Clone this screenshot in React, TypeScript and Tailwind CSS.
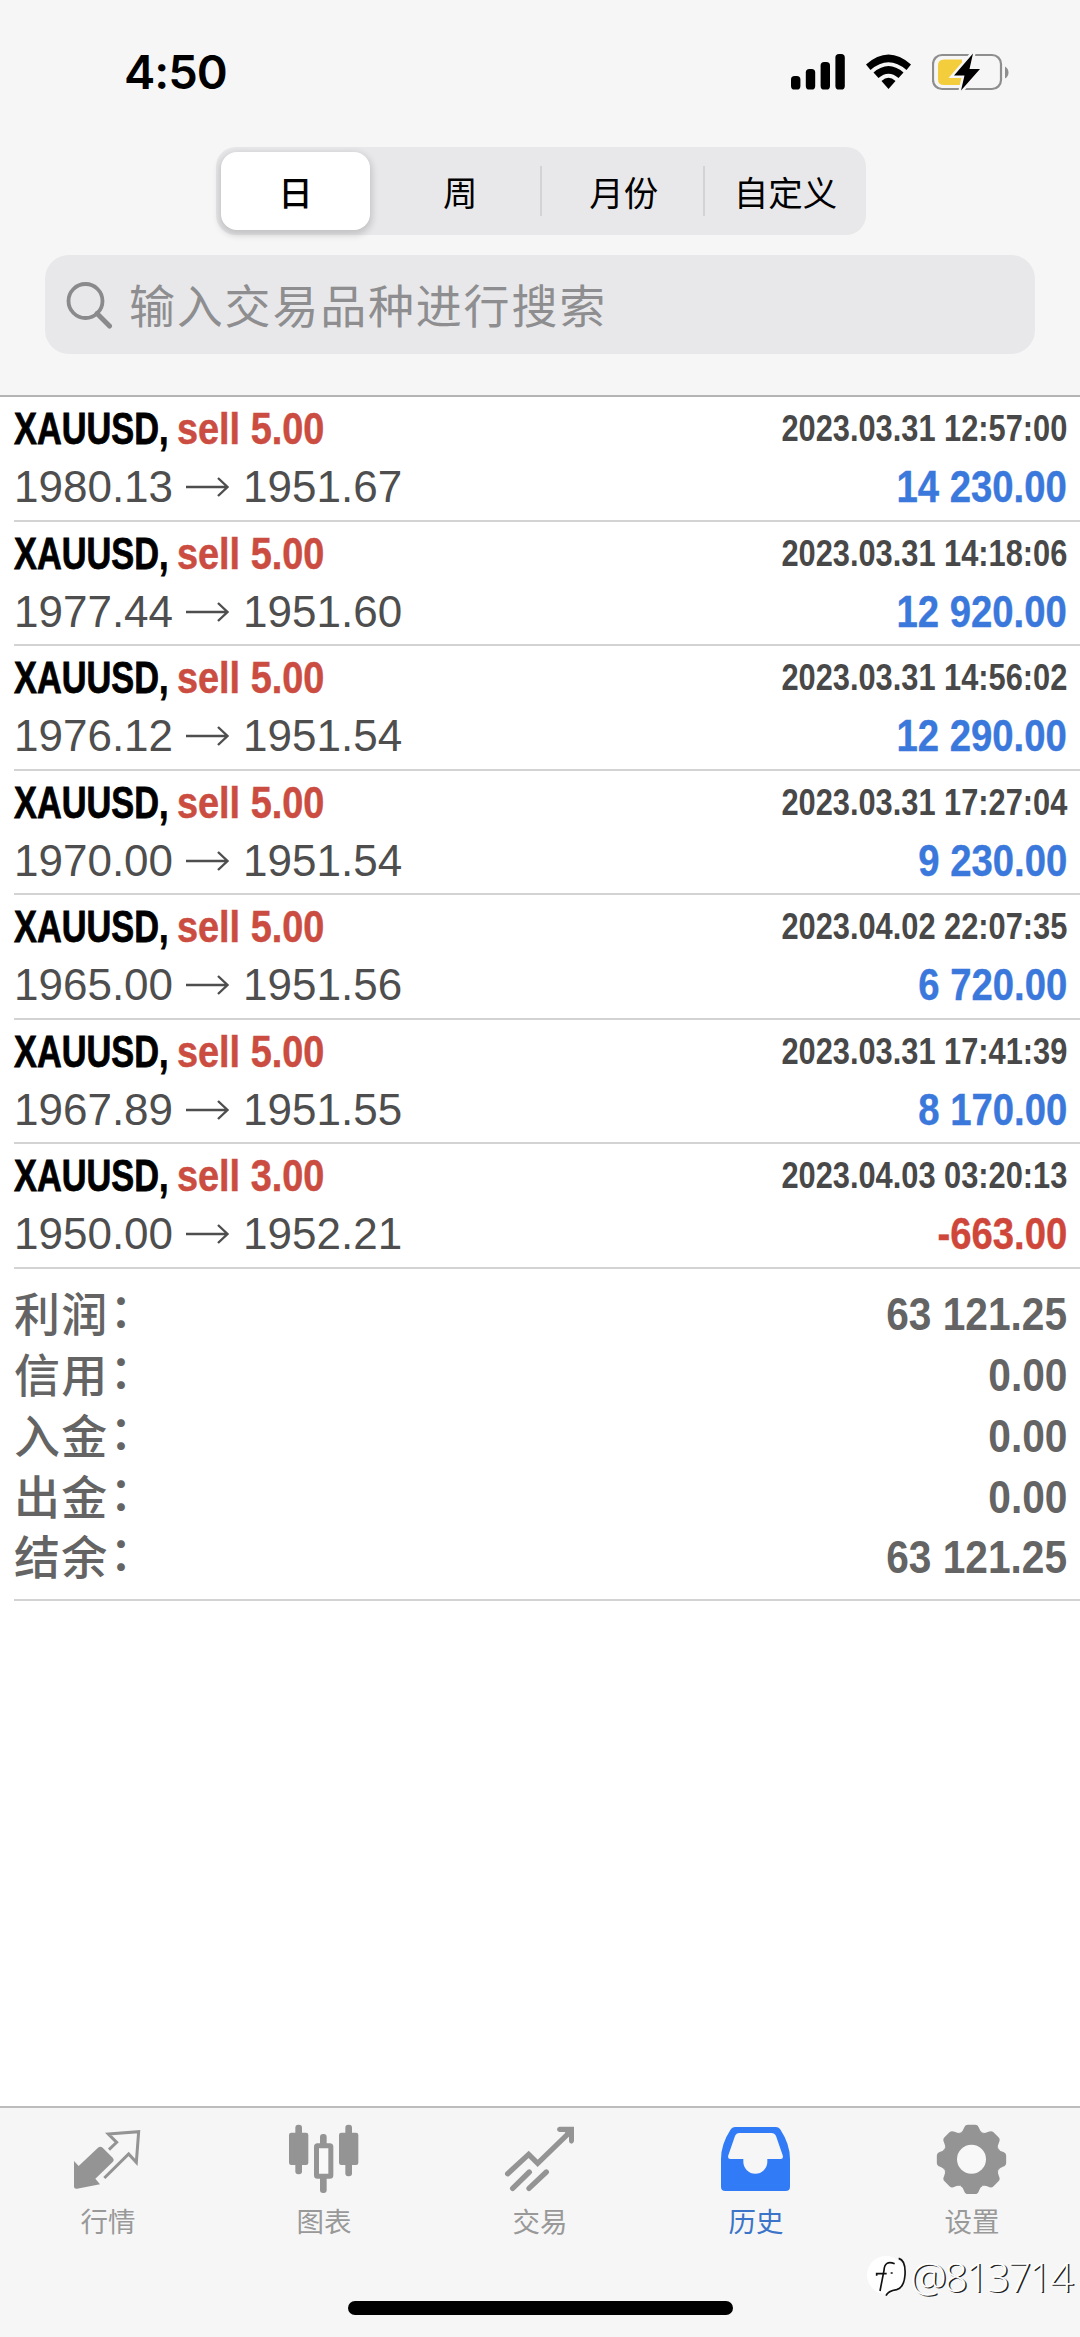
import React from "react";
import clsx from "clsx";

type Deal = {
  volume: string;
  open: string;
  close: string;
  time: string;
  profit: string;
};

const deals: Deal[] = [
  { volume: "5.00", open: "1980.13", close: "1951.67", time: "2023.03.31 12:57:00", profit: "14 230.00" },
  { volume: "5.00", open: "1977.44", close: "1951.60", time: "2023.03.31 14:18:06", profit: "12 920.00" },
  { volume: "5.00", open: "1976.12", close: "1951.54", time: "2023.03.31 14:56:02", profit: "12 290.00" },
  { volume: "5.00", open: "1970.00", close: "1951.54", time: "2023.03.31 17:27:04", profit: "9 230.00" },
  { volume: "5.00", open: "1965.00", close: "1951.56", time: "2023.04.02 22:07:35", profit: "6 720.00" },
  { volume: "5.00", open: "1967.89", close: "1951.55", time: "2023.03.31 17:41:39", profit: "8 170.00" },
  { volume: "3.00", open: "1950.00", close: "1952.21", time: "2023.04.03 03:20:13", profit: "-663.00" },
];

const totals = [
  { label: "利润", value: "63 121.25" },
  { label: "信用", value: "0.00" },
  { label: "入金", value: "0.00" },
  { label: "出金", value: "0.00" },
  { label: "结余", value: "63 121.25" },
];

const periods = ["日", "周", "月份", "自定义"];

const StatusBar: React.FC = () => {
  return (
    <div className="flex h-[147px] items-start justify-between pl-[124px] pr-[70px] pt-[48px]">
      <span className="font-['Inter'] text-[47px] font-semibold leading-[48px] tracking-[-1px] text-black">4:50</span>
      <div className="flex pt-[5px]">
        {/* Signal */}
        <svg width="56" height="38" viewBox="0 0 56 38">
          <rect x="0" y="23" width="9.4" height="13.5" rx="3.6" />
          <rect x="14.8" y="16" width="9.4" height="20.5" rx="3.6" />
          <rect x="29.6" y="9" width="9.4" height="27.5" rx="3.6" />
          <rect x="44.4" y="1" width="9.4" height="35.5" rx="3.6" />
        </svg>
        {/* Wifi */}
        <svg width="48" height="38" viewBox="0 0 48 38" className="ml-[18px]">
          <path d="M1 11.5Q23.5 -8.5 46 11.5L41.5 17Q23.5 1.500 5.500 17Z" />
          <path d="M8.500 19.500Q23.500 6.500 38.500 19.500L33.500 25Q23.500 16.500 13.500 25Z" />
          <path d="M16.500 28Q23.500 21.500 30.500 28L23.500 36Z" />
        </svg>
        {/* Battery */}
        <svg width="78" height="38" viewBox="0 0 78 38" className="ml-[19px]">
          <rect x="1" y="2" width="68" height="34" rx="9" fill="none" stroke="#8e8e8e" strokeWidth="2.200" />
          <path d="M12 6.500H30V32H12Q6 32 6 26.500V12.500Q6 6.500 12 6.500Z" fill="#f4cd3c" />
          <path d="M73 13.500Q76.500 15.500 76.500 19.500Q76.500 23.500 73 25.500Z" fill="#8e8e8e" />
          <path
            d="M41 .500L22 22.500H32.500L29 37.500L48 16H37.500Z"
            fill="#000"
            stroke="#f6f6f6"
            strokeWidth="5"
            paintOrder="stroke"
          />
        </svg>
      </div>
    </div>
  );
};

const Header: React.FC = () => {
  return (
    <header className="h-[397px] border-b-2 border-[#b4b4b4] bg-[#f6f6f6]">
      <StatusBar />

      {/* Period switch */}
      <div className="ml-[216px] flex h-[88px] w-[650px] rounded-[20px] bg-[#e8e8ea]">
        {periods.map((period, i) => (
          <div
            key={period}
            className={clsx(
              "flex items-center text-[34.500px] leading-none text-black",
              i === 0 && "w-[162px] pl-[5px]",
              (i === 1 || i === 2) && "w-[163.500px]",
              i === 3 && "w-[161px]"
            )}
          >
            {i === 0 ? (
              <span className="flex h-[78px] w-[149px] items-center justify-center rounded-[16px] bg-white font-medium shadow-[0_3px_7px_2px_rgba(0,0,0,0.16)]">
                {period}
              </span>
            ) : (
              <>
                <span className={clsx("flex-1 whitespace-nowrap text-center", i < 3 && "pl-[3px]")}>{period}</span>
                {i < 3 && <i className="h-[50px] w-[2px] bg-[#d3d3d5]" />}
              </>
            )}
          </div>
        ))}
      </div>

      {/* Search */}
      <div className="mx-[45px] mt-[20px] flex h-[99px] items-center rounded-[24px] bg-[#e8e8ea] pl-[21px]">
        <svg width="48" height="48" viewBox="0 0 48 48" fill="none" stroke="#8a8a8c" className="shrink-0">
          <circle cx="19.500" cy="20" r="17" strokeWidth="3.800" />
          <path d="M31 32.500L43.500 45" strokeWidth="5" strokeLinecap="round" />
        </svg>
        <span className="ml-[15px] pb-[4px] text-[46px] leading-none tracking-[1.800px] text-[#8e8e90]">输入交易品种进行搜索</span>
      </div>
    </header>
  );
};

const DealRow: React.FC<{ deal: Deal }> = ({ deal }) => {
  const isLoss = deal.profit.startsWith("-");
  return (
    <div className="ml-[14px] flex h-[124.57px] flex-col border-b-2 border-[#d3d3d3] pr-[14px] pt-[10px] font-['Liberation_Sans'] leading-none">
      <div className="flex h-[44px] justify-between">
        <div className="flex whitespace-nowrap text-[44px] font-bold">
          <span className="w-[163px] origin-left scale-x-[0.78] text-black [-webkit-text-stroke:0.8px_#000]">XAUUSD,</span>
          <span className="origin-left scale-x-[0.86] text-[#cb4c40] [-webkit-text-stroke:0.5px_#cb4c40]">
            sell {deal.volume}
          </span>
        </div>
        <span className="-mr-px origin-right scale-x-[0.855] pt-[4px] text-[36px] font-bold text-[#484848]">{deal.time}</span>
      </div>
      <div className="mt-[14px] flex h-[44px] justify-between text-[44px]">
        <div className="flex items-center text-[#4e4e4e]">
          <span>{deal.open}</span>
          <svg width="44" height="24" viewBox="0 0 44 24" fill="none" stroke="#4e4e4e" strokeWidth="2.400" className="mx-[13px]">
            <path d="M0 12H41.500M32 3L41.500 12L32 21" />
          </svg>
          <span>{deal.close}</span>
        </div>
        <span
          className={clsx(
            "-mr-px origin-right scale-x-[0.87] font-bold [-webkit-text-stroke:0.4px_currentColor]",
            isLoss ? "text-[#cf473a]" : "text-[#3b78dc]"
          )}
        >
          {deal.profit}
        </span>
      </div>
    </div>
  );
};

const QuotesIcon = () => (
  <svg width="80" height="72" viewBox="204 93 240 216">
    <path
      d="M222 213L236 228L294 173Q301 168 308 173L338 203Q344 210 338 216L286 266L300 283L231 296Q222 297 222 290Z"
      fill="#949494"
    />
    <path
      d="M327 179L350 157L325 132L416 125L409 217L386 192L313 264"
      fill="none"
      stroke="#949494"
      strokeWidth="9"
    />
  </svg>
);

const ChartsIcon = () => (
  <svg width="80" height="72" viewBox="852 93 240 216" fill="#949494">
    <rect x="886" y="104" width="20" height="149" rx="9" />
    <rect x="867" y="128" width="58" height="97" rx="7" />
    <rect x="1036" y="104" width="20" height="155" rx="9" />
    <rect x="1017" y="128" width="58" height="97" rx="7" />
    <rect x="960" y="132" width="20" height="60" rx="9" />
    <rect x="960" y="250" width="20" height="59" rx="9" />
    <rect x="949.500" y="167" width="43" height="92" rx="3" fill="#f8f8f8" stroke="#949494" strokeWidth="15" />
  </svg>
);

const TradeIcon = () => (
  <svg width="80" height="72" viewBox="300 93 240 216" fill="none" stroke="#949494" strokeWidth="16" strokeLinecap="round">
    <path d="M323 251L386 193L413 220L508 128" strokeLinejoin="miter" />
    <path d="M338 295L388 246M387 295L439 246" />
    <path d="M478 110H522V154Q520 161 514 161Q507 160 507 154V139L494 126H478Q471 124 471 118Q471 112 478 110Z" fill="#949494" stroke="none" />
  </svg>
);

const HistoryIcon = () => (
  <svg width="80" height="72" viewBox="948 93 240 216">
    <path
      d="M1006 111H1127Q1137 111 1142 120Q1170 163 1170 207V290Q1170 303 1157 303H976Q963 303 963 290V207Q963 163 991 120Q996 111 1006 111Z"
      fill="#317cf6"
    />
    <path
      d="M1018 129H1114Q1124 129 1128 138L1148 196Q1151 207 1142 207H1102V215A36 36 0 0 1 1030 215V207H991Q982 207 985 196L1005 138Q1009 129 1018 129Z"
      fill="#f6f6f6"
    />
  </svg>
);

const SettingsIcon = () => (
  <svg width="80" height="72" viewBox="456 93 240 216" overflow="visible">
    <g fill="#949494">
      <circle cx="574.500" cy="208" r="86" />
      {[0, 45, 90, 135, 180, 225, 270, 315].map((angle) => (
        <path
          key={angle}
          d="M541 128Q549 124 552 114Q555 104 564 104H585Q594 104 597 114Q600 124 608 128Z"
          transform={`rotate(${angle} 574.500 208)`}
        />
      ))}
    </g>
    <circle cx="574.500" cy="208" r="43.500" fill="#f8f8f8" />
  </svg>
);

const tabs = [
  { label: "行情", Icon: QuotesIcon },
  { label: "图表", Icon: ChartsIcon },
  { label: "交易", Icon: TradeIcon },
  { label: "历史", Icon: HistoryIcon, active: true },
  { label: "设置", Icon: SettingsIcon },
];

const Watermark: React.FC = () => {
  return (
    <div className="absolute right-[9px] top-[142px] flex h-[52px] items-center">
      <svg width="44" height="46" viewBox="0 0 132 138" fill="none" className="mt-[4px]">
        <circle cx="60" cy="60" r="57" fill="#fff" />
        <path
          d="M86 26Q56 14 54 46L42 108M32 62V56H62M74 54H80"
          stroke="#111"
          strokeWidth="5"
        />
        <path d="M98 10Q120 16 117 60Q114 98 92 104Q66 108 60 122" stroke="#111" strokeWidth="5" />
      </svg>
      <span className="whitespace-nowrap font-['Open_Sans'] text-[41px] font-light leading-none tracking-[-2.300px] text-white [text-shadow:1.5px_1px_0.5px_#222]">
        @813714
      </span>
    </div>
  );
};

const TabBar: React.FC = () => {
  return (
    <nav className="relative flex h-[231px] flex-col border-t-2 border-[#bcbcbc] bg-[#f6f6f6]">
      <div className="grid grid-cols-5 pt-[13px]">
        {tabs.map(({ label, Icon, active }) => (
          <div key={label} className="flex flex-col items-center">
            <Icon />
            <span className={clsx("mt-[12px] text-[27.500px] leading-[30px]", active ? "text-[#3b74c8]" : "text-[#999999]")}>
              {label}
            </span>
          </div>
        ))}
      </div>
      {/* Home indicator */}
      <div className="mb-[22px] ml-[348px] mt-auto h-[14px] w-[385px] rounded-full bg-black" />
      <Watermark />
    </nav>
  );
};

const App: React.FC = () => {
  return (
    <div className="flex h-[2337px] w-[1080px] flex-col overflow-hidden bg-white font-['Noto_Sans_CJK_SC',sans-serif]">
      <Header />
      <main className="flex-1">
        {deals.map((deal) => (
          <DealRow key={deal.time} deal={deal} />
        ))}

        {/* Totals */}
        <div className="ml-[14px] h-[332.500px] border-b-2 border-[#d3d3d3] pr-[14px] pt-[14px] text-[#646464]">
          {totals.map(({ label, value }) => (
            <div key={label} className="flex h-[60.900px] items-center justify-between leading-none">
              <span className="flex pb-[5px] text-[46px] font-medium tracking-[1.200px]">
                {label}
                <span className="ml-px -mt-[4px]">：</span>
              </span>
              <span className="-mr-px origin-right scale-x-[0.865] font-['Liberation_Sans'] text-[47px] font-bold">{value}</span>
            </div>
          ))}
        </div>
      </main>
      <TabBar />
    </div>
  );
};

export default App;
